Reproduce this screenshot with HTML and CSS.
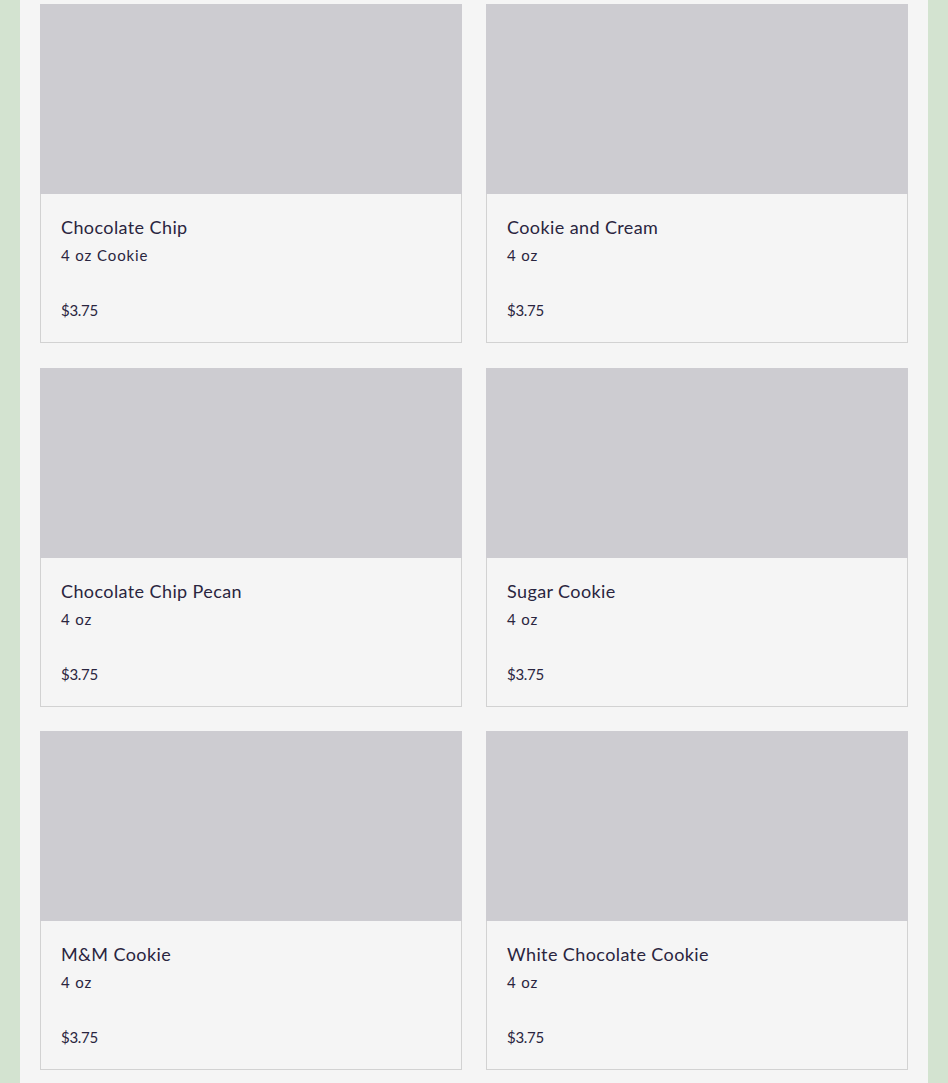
FILE: index.html
```html
<!DOCTYPE html>
<html lang="en">
<head>
    <meta charset="UTF-8">
    <meta name="viewport" content="width=device-width, initial-scale=1.0">
    <title>Cookies</title>
    <link rel="stylesheet" href="styles.css">
</head>
<body>
    <main class="panel">
        <div class="grid">
            <div class="card">
                <div class="card-image"></div>
                <div class="card-body">
                    <h3>Chocolate Chip</h3>
                    <p class="size">4 oz Cookie</p>
                    <p class="price">$3.75</p>
                </div>
            </div>
            <div class="card">
                <div class="card-image"></div>
                <div class="card-body">
                    <h3>Cookie and Cream</h3>
                    <p class="size">4 oz</p>
                    <p class="price">$3.75</p>
                </div>
            </div>
            <div class="card">
                <div class="card-image"></div>
                <div class="card-body">
                    <h3>Chocolate Chip Pecan</h3>
                    <p class="size">4 oz</p>
                    <p class="price">$3.75</p>
                </div>
            </div>
            <div class="card">
                <div class="card-image"></div>
                <div class="card-body">
                    <h3>Sugar Cookie</h3>
                    <p class="size">4 oz</p>
                    <p class="price">$3.75</p>
                </div>
            </div>
            <div class="card">
                <div class="card-image"></div>
                <div class="card-body">
                    <h3>M&amp;M Cookie</h3>
                    <p class="size">4 oz</p>
                    <p class="price">$3.75</p>
                </div>
            </div>
            <div class="card">
                <div class="card-image"></div>
                <div class="card-body">
                    <h3>White Chocolate Cookie</h3>
                    <p class="size">4 oz</p>
                    <p class="price">$3.75</p>
                </div>
            </div>
        </div>
    </main>
</body>
</html>
```

FILE: styles.css
```css
body {
    margin: 0;
    font-family: Lato, "Open Sans", sans-serif;
    background-color: #d3e3d0;
    color: #2a2540;
}

.panel {
    margin: 0 20px;
    padding: 4px 20px 40px;
    background-color: #f5f5f5;
    min-height: 1083px;
    box-sizing: border-box;
}

.grid {
    display: grid;
    grid-template-columns: 1fr 1fr;
    column-gap: 24px;
    row-gap: 24.5px;
}

.card {
    border: 1px solid #d2d2d2;
    border-top: none;
    background-color: #f5f5f5;
}

.card-image {
    height: 190px;
    background-color: #cdccd1;
    margin: 0 -1px;
}

.card-body {
    padding: 21px 20px 22px;
}

.card-body h3 {
    margin: 0;
    font-size: 18px;
    font-weight: 400;
    line-height: 24px;
    letter-spacing: 0.4px;
}

.card-body .size {
    margin: 6px 0 0;
    font-size: 15px;
    line-height: 20px;
    letter-spacing: 0.9px;
}

.card-body .price {
    margin: 35px 0 0;
    font-size: 15px;
    line-height: 20px;
    letter-spacing: -0.3px;
}
```
